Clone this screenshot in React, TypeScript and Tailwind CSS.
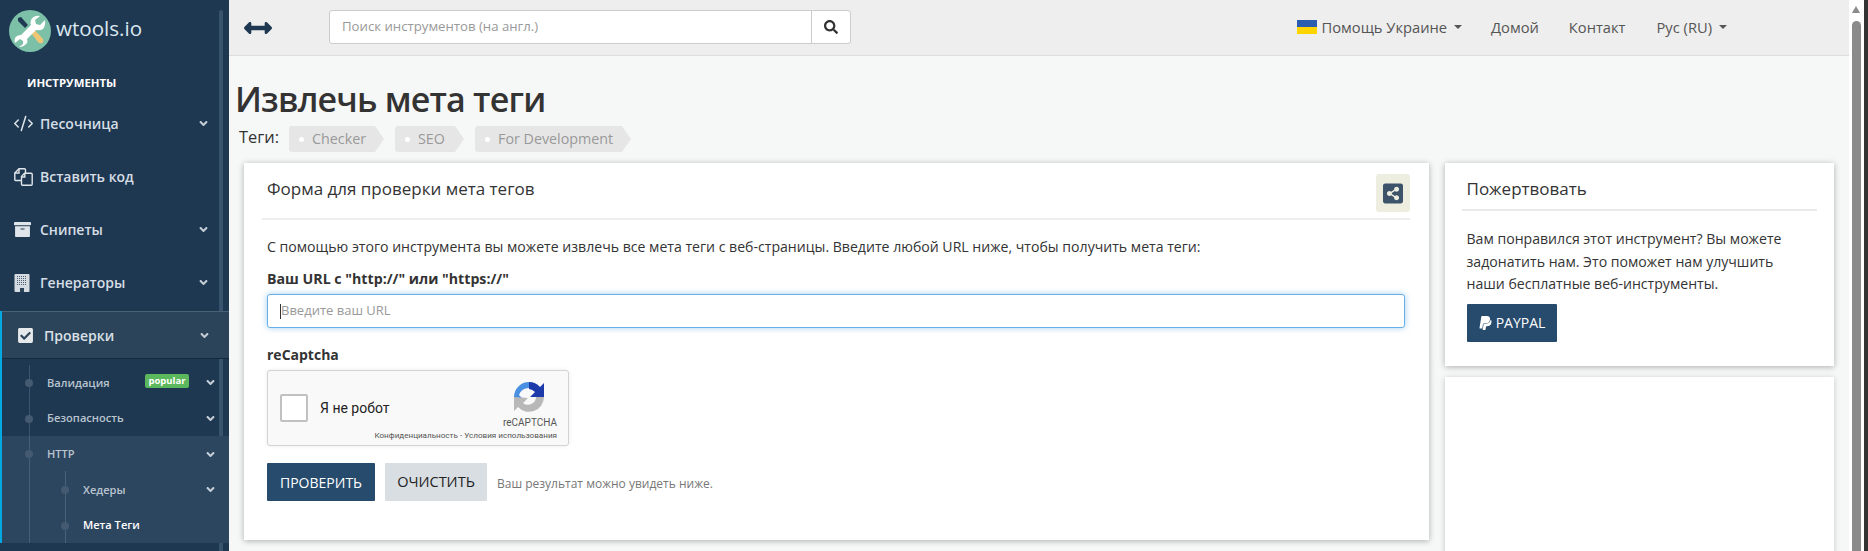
import type { ReactNode } from 'react';
import { CodeXml } from 'lucide-react';
import {
  FaAngleDown,
  FaArchive,
  FaArrowsAltH,
  FaCheckSquare,
  FaPaypal,
  FaSearch,
  FaShareAltSquare,
} from 'react-icons/fa';

function Logo() {
  return (
    <svg viewBox="0 0 42 42" className="w-[42px] h-[42px] shrink-0">
      <circle cx="21" cy="21" r="21" fill="#7cc0a8" />
      <path d="M9 8 L12 7 L19 15 L16 18 L9 11 Z" fill="#1f3853" />
      <path d="M19 19 L22 16 L34 29 Q35 32 33 33 Q31 34 29 32 Z" fill="#f0c674" />
      <path
        d="M36 10 L31 15 L27 14 L26 10 L31 6 Q25 5 22 10 Q21 13 22 15 L12 25 Q8 25 6 28 Q5 31 6 33 L11 29 L14 31 L14 34 L10 37 Q15 37 18 33 Q19 31 18 29 L27 20 Q31 21 34 19 Q37 15 36 10 Z"
        fill="#ffffff"
      />
    </svg>
  );
}

function PasteIcon() {
  return (
    <svg viewBox="0 0 19 18" className="w-[19px] h-[18px]" fill="none" stroke="currentColor" strokeWidth="1.4">
      <path d="M7.5 12.5 H1.5 Q0.8 12.5 0.8 11.8 V5 L5 0.8 H10.5 Q11.5 0.8 11.5 1.8 V5" />
      <path d="M0.8 5 H5 V0.8" />
      <path d="M10.5 5.2 H17.2 Q18.2 5.2 18.2 6.2 V16.2 Q18.2 17.2 17.2 17.2 H8.5 Q7.5 17.2 7.5 16.2 V8.5 Z" />
      <path d="M7.5 9 H10.8 V5.5" />
    </svg>
  );
}

function GridIcon() {
  const dots = [];
  for (let r = 0; r < 5; r++) {
    for (let c = 0; c < 5; c++) {
      dots.push(<rect key={`${r}-${c}`} x={3 + c * 2} y={2 + r * 2} width="1" height="1" fill="#4a6076" />);
    }
  }
  return (
    <svg viewBox="0 0 16 18" className="w-[16px] h-[18px]">
      <rect x="0.5" y="0" width="15" height="18" rx="1" fill="#d5dbe1" />
      {dots}
      <rect x="6" y="14" width="4" height="4" fill="#2c4459" />
    </svg>
  );
}

function Recaptcha() {
  return (
    <svg viewBox="0 0 30 30" className="w-[30px] h-[30px]">
      <path d="M15 0 A15 15 0 0 0 0 15 L0 16 L8 16 L5 13 A10 10 0 0 1 15 6 Z" fill="#4a90e2" />
      <path d="M15 0 A15 15 0 0 1 26 5 L30 1 L30 15 L16 15 L21 10 A9 9 0 0 0 15 7 Z" fill="#1c3aa9" />
      <path d="M0 15 L0 29 L4 25 A15 15 0 0 0 30 15 L22 15 A8 8 0 0 1 9 21 L14 16 L0 15 Z" fill="#b8b8b8" />
    </svg>
  );
}

function MenuItem({ icon, label, arrow = true }: { icon: ReactNode; label: string; arrow?: boolean }) {
  return (
    <div className="h-[53px] flex items-center pl-[14px] pr-[19px] text-[#d5dde5] text-[14px] font-semibold">
      <span className="w-[26px] flex items-center text-[#dfe5ea]">{icon}</span>
      <span className="flex-1">{label}</span>
      {arrow && <FaAngleDown className="w-[13px] h-[13px] text-[#c5ced7]" />}
    </div>
  );
}

function SubItem({ label, nested = false, active = false, arrow = true, badge }: { label: string; nested?: boolean; active?: boolean; arrow?: boolean; badge?: string }) {
  return (
    <div className={`relative h-[35.7px] flex items-center pr-[12px] text-[11.1px] font-semibold ${nested ? 'pl-[81px]' : 'pl-[45px]'} ${active ? 'text-white' : 'text-[#b9c4cf]'}`}>
      <span className={`absolute top-[14px] w-[8px] h-[8px] rounded-full bg-[#435a71] ${nested ? 'left-[59px]' : 'left-[23px]'}`} />
      <span className="flex-1">{label}</span>
      {badge && (
        <span className="mr-[15px] -mt-[4px] w-[44px] h-[14px] rounded-[2px] bg-[#5cb85c] text-white text-[9.5px] font-bold leading-[14px] text-center">{badge}</span>
      )}
      {arrow && <FaAngleDown className="w-[13px] h-[13px] text-[#c5ced7]" />}
    </div>
  );
}

function Tag({ label, className }: { label: string; className: string }) {
  return (
    <span className={`h-[26px] flex items-center pl-[10px] bg-[#e6e6e6] text-[#999999] text-[14.3px] rounded-l-[3px] [clip-path:polygon(0_0,calc(100%-9px)_0,100%_50%,calc(100%-9px)_100%,0_100%)] ${className}`}>
      <span className="w-[5px] h-[5px] rounded-full bg-white mr-[8px]" />
      {label}
    </span>
  );
}

export default function App() {
  return (
    <div className="flex w-[1868px] h-[551px] overflow-hidden bg-white font-['Open_Sans',sans-serif] text-[#333333]">
      {/* sidebar */}
      <aside className="relative w-[229px] shrink-0 bg-[#1f3851]">
        <span className="absolute left-[219px] top-[10px] bottom-0 w-[4px] rounded-t-full bg-[#3f5a76]/80" />
        <div className="flex items-center h-[62px] pl-[9px] gap-[5px]">
          <Logo />
          <span className="text-[#dbe6ef] text-[20.6px] leading-none -mt-[5px]">wtools.io</span>
        </div>
        <div className="h-[31px] flex items-center pl-[27px] pt-[11px] text-white text-[11.4px] font-bold">ИНСТРУМЕНТЫ</div>
        <div className="pt-[4px]">
          <MenuItem icon={<CodeXml className="w-[21px] h-[21px] -ml-[1px]" strokeWidth={1.7} />} label="Песочница" />
          <MenuItem icon={<PasteIcon />} label="Вставить код" arrow={false} />
          <MenuItem icon={<FaArchive className="w-[17px] h-[17px]" />} label="Снипеты" />
          <MenuItem icon={<GridIcon />} label="Генераторы" />
        </div>
        <div className="relative border-l-2 border-[#03a9e0]">
          <div className="h-[48px] mt-[2px] flex items-center pl-[15px] pr-[18px] bg-[#2c4459] border-t border-[#4a6075] border-b border-b-[#14293e] text-[#d9e0e7] text-[14px] font-semibold">
            <FaCheckSquare className="w-[17px] h-[17px] mr-[10px] text-[#e6e9ec]" />
            <span className="flex-1">Проверки</span>
            <FaAngleDown className="w-[13px] h-[13px] text-[#c5ced7]" />
          </div>
          <div className="relative pt-[6px]">
            <span className="absolute left-[27px] top-[6px] bottom-0 w-px bg-[#3c546c]" />
            <SubItem label="Валидация" badge="popular" />
            <SubItem label="Безопасность" />
            <div className="relative bg-[#2d4660]">
              <span className="absolute left-[63px] top-[35px] bottom-0 w-px bg-[#49617a]" />
              <span className="absolute left-[27px] top-0 bottom-0 w-px bg-[#46607a]" />
              <SubItem label="HTTP" />
              <SubItem label="Хедеры" nested />
              <SubItem label="Мета Теги" nested active arrow={false} />
            </div>
          </div>
        </div>
      </aside>

      {/* main */}
      <main className="w-[1620px] shrink-0 bg-[#f6f7f7]">
        <header className="h-[56px] flex items-center bg-[#eeeeee] border-b border-[#dddddd] pl-[15px] pr-[122px]">
          <FaArrowsAltH className="w-[28px] h-[28px] text-[#1f3851]" />
          <div className="ml-[57px] w-[522px] h-[34px] flex bg-white border border-[#cccccc] rounded-[3px] -mt-[1px]">
            <div className="flex-1 flex items-center pl-[12px] text-[13.2px] text-[#999999]">Поиск инструментов (на англ.)</div>
            <div className="w-[39px] flex items-center justify-center border-l border-[#cccccc] text-[#333333]">
              <FaSearch className="w-[14px] h-[14px]" />
            </div>
          </div>
          <nav className="ml-auto flex items-center text-[14.7px] text-[#555555]">
            <span className="flex flex-col w-[20px] h-[14px] mr-[5px]">
              <span className="flex-1 bg-[#2a5db0]" />
              <span className="flex-1 bg-[#ffd500]" />
            </span>
            Помощь Украине
            <span className="ml-[7px] w-0 h-0 border-x-[4px] border-x-transparent border-t-[4px] border-t-[#555555]" />
            <span className="ml-[29px]">Домой</span>
            <span className="ml-[30px]">Контакт</span>
            <span className="ml-[31px]">Рус (RU)</span>
            <span className="ml-[7px] w-0 h-0 border-x-[4px] border-x-transparent border-t-[4px] border-t-[#555555]" />
          </nav>
        </header>

        <div className="pl-[6px] pt-[20px]">
          <h1 className="text-[34px] leading-[46px] font-semibold tracking-[-0.8px] text-[#333333]">Извлечь мета теги</h1>
        </div>
        <div className="flex items-center h-[26px] mt-[4px] pl-[10px] text-[16.4px]">
          <span className="w-[50px] -mt-[4px]">Теги:</span>
          <Tag label="Checker" className="w-[95px]" />
          <Tag label="SEO" className="w-[69px] ml-[11px]" />
          <Tag label="For Development" className="w-[156px] ml-[11px]" />
        </div>

        <div className="flex items-start pl-[15px] pt-[11px] gap-[15.5px]">
          {/* form card */}
          <section className="w-[1185px] h-[377px] bg-white shadow-[0_1px_6px_rgba(0,0,0,0.3)] pl-[18px] pr-[19px]">
            <div className="h-[57px] flex items-start justify-between border-b-2 border-[#eeeeee]">
              <h2 className="pl-[5px] pt-[15px] text-[17px] leading-[22px] text-[#333333]">Форма для проверки мета тегов</h2>
              <button className="mt-[11px] w-[34px] h-[38px] rounded-[3px] bg-[#eeeee0] flex items-center justify-center">
                <FaShareAltSquare className="w-[20px] h-[23px] text-[#3d5369]" />
              </button>
            </div>
            <div className="pl-[5px] pr-[5px]">
              <p className="pt-[16px] text-[14.1px] leading-[22px]">С помощью этого инструмента вы можете извлечь все мета теги с веб-страницы. Введите любой URL ниже, чтобы получить мета теги:</p>
              <label className="block mt-[11px] text-[14.2px] leading-[20px] font-bold">Ваш URL с "http://" или "https://"</label>
              <div className="mt-[5px] h-[34px] flex items-center pl-[12px] bg-white border border-[#66afe9] rounded-[3px] shadow-[0_0_6px_rgba(102,175,233,0.6)] text-[13px] text-[#999999]">
                <span className="w-px h-[15px] bg-[#333333]" />
                Введите ваш URL
              </div>
              <div className="mt-[17px] text-[14px] leading-[20px] font-bold">reCaptcha</div>
              <div className="mt-[5px] relative w-[302px] h-[76px] bg-[#f9f9f9] border border-[#d3d3d3] rounded-[3px] shadow-[0_0_4px_rgba(0,0,0,0.08)] flex items-center pl-[12px]">
                <span className="w-[28px] h-[28px] bg-white border-2 border-[#c1c1c1] rounded-[2px]" />
                <span className="ml-[12px] text-[14px] font-['Roboto',sans-serif] text-[#222222]">Я не робот</span>
                <div className="absolute right-[11px] top-[3px] flex flex-col items-end">
                  <div className="mr-[13px] mt-[8px]"><Recaptcha /></div>
                  <span className="mt-[5px] text-[10px] leading-[12px] font-['Roboto',sans-serif] text-[#555555]">reCAPTCHA</span>
                </div>
                <span className="absolute right-[11px] bottom-[5px] text-[8.1px] leading-[10px] font-['Roboto',sans-serif] text-[#555555]">Конфиденциальность - Условия использования</span>
              </div>
              <div className="mt-[17px] flex items-center">
                <button className="w-[108px] h-[38px] bg-[#274b6d] text-white text-[14px] rounded-[1px]">ПРОВЕРИТЬ</button>
                <button className="ml-[10px] w-[102px] h-[38px] bg-[#d9dee3] text-[#222222] text-[14.5px] rounded-[1px]">ОЧИСТИТЬ</button>
                <span className="ml-[10px] mt-[4px] text-[12px] text-[#777777]">Ваш результат можно увидеть ниже.</span>
              </div>
            </div>
          </section>

          {/* right column */}
          <div className="w-[389px] flex flex-col gap-[11px]">
            <section className="h-[203px] bg-white shadow-[0_1px_6px_rgba(0,0,0,0.3)] pl-[17px] pr-[17px]">
              <h2 className="h-[48px] pl-[5px] pt-[15px] text-[17px] leading-[22px] border-b-2 border-[#e8eaec]">Пожертвовать</h2>
              <p className="pl-[5px] pt-[17px] text-[14.1px] leading-[22.5px] w-[340px]">Вам понравился этот инструмент? Вы можете задонатить нам. Это поможет нам улучшить наши бесплатные веб-инструменты.</p>
              <button className="ml-[5px] mt-[8px] w-[90px] h-[38px] flex items-center justify-center gap-[3px] bg-[#274b6d] text-white text-[14px] rounded-[1px]">
                <FaPaypal className="w-[15px] h-[16px]" />
                PAYPAL
              </button>
            </section>
            <section className="h-[200px] bg-white shadow-[0_1px_6px_rgba(0,0,0,0.2)]" />
          </div>
        </div>
      </main>

      {/* browser scrollbar */}
      <div className="flex-1 flex bg-white">
        <div className="relative ml-[3px] w-[9px] h-full">
          <span className="absolute left-0 top-[6px] w-0 h-0 border-x-[4.5px] border-x-transparent border-b-[7px] border-b-[#8a8a8a]" />
          <span className="absolute left-0 top-[21px] bottom-0 w-[9px] rounded-t-full bg-[#8a8a8a]" />
        </div>
        <div className="ml-[3px] w-[4px] h-full bg-[#333333]" />
      </div>
    </div>
  );
}
